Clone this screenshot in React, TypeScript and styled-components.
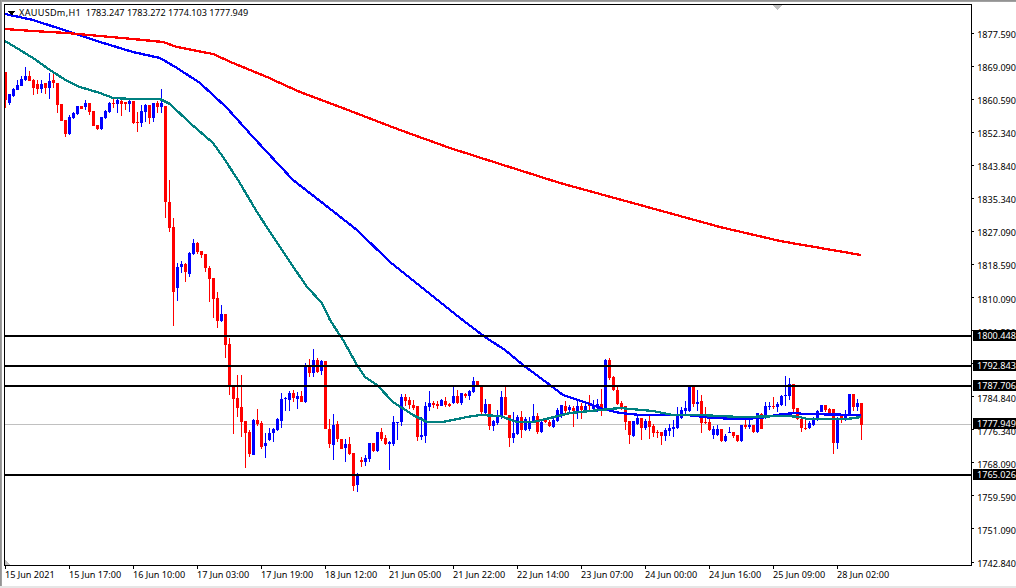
import React from 'react';
import styled, { createGlobalStyle } from 'styled-components';

type Candle = ['r' | 'b', number, number, number, number];

const candles: Candle[] = [
  ['r',72,100,72,108],['b',94,103,94,105],['b',89,96,88,97],['b',85,90,80,90],['b',79,86,76,86],
  ['b',76,80,67,81],['r',76,81,71,81],['r',80,88,79,95],['r',84,89,80,94],['b',84,89,80,93],
  ['r',83,88,83,94],['b',81,88,73,99],['r',80,83,73,88],['r',83,105,83,113],['r',104,121,104,121],
  ['r',120,134,120,137],['b',117,134,115,135],['b',113,118,112,119],['b',106,114,106,115],['r',106,109,106,109],
  ['b',103,107,100,110],['r',103,112,103,115],['r',111,126,111,126],['r',125,129,125,130],['b',117,129,117,130],
  ['b',111,118,110,119],['b',103,112,102,113],['r',103,104,98,108],['b',100,104,98,113],['r',101,104,99,116],
  ['r',102,104,102,110],['b',101,104,100,112],['r',101,123,101,124],['r',122,123,112,132],['b',111,123,105,127],
  ['b',105,112,104,122],['r',105,118,105,124],['b',103,118,103,122],['r',103,107,101,113],['b',103,107,89,113],
  ['r',106,202,106,218],['r',202,228,180,232],['r',227,292,218,326],['b',267,288,263,301],['b',264,267,261,273],
  ['r',264,272,263,282],['b',253,274,252,277],['b',243,254,239,255],['r',243,252,242,254],['r',251,255,251,258],
  ['r',254,268,254,272],['r',268,279,266,302],['r',278,299,278,318],['r',298,321,292,328],['b',314,321,305,322],
  ['r',314,345,314,358],['r',344,386,338,395],['r',385,399,385,434],['r',398,408,375,417],['r',407,422,375,437],
  ['r',421,433,421,468],['r',432,454,430,457],['b',420,455,419,455],['r',420,424,409,426],['r',423,447,421,449],
  ['b',443,446,433,458],['b',433,440,428,441],['b',429,433,428,442],['b',419,430,418,431],['b',399,421,393,428],
  ['b',398,399,397,411],['b',393,400,391,411],['r',393,398,390,402],['b',396,399,392,409],['r',396,402,391,402],
  ['b',367,402,363,403],['r',367,373,359,377],['b',360,373,349,377],['r',360,372,358,373],['b',361,371,360,375],
  ['r',361,429,361,429],['r',429,444,419,448],['b',425,445,414,460],['r',424,439,421,442],['r',439,449,439,449],
  ['b',444,448,439,462],['r',444,454,437,455],['r',453,486,453,491],['b',475,485,473,492],['r',460,462,457,467],
  ['b',458,462,455,466],['b',443,459,443,462],['r',443,451,443,452],['b',432,451,432,452],['r',432,439,428,441],
  ['r',438,444,435,445],['b',442,444,441,470],['b',422,444,416,446],['b',422,423,422,440],['b',397,422,394,426],
  ['r',397,401,394,406],['r',400,405,397,409],['r',405,408,400,410],['r',406,437,406,441],['b',435,437,417,440],
  ['b',406,436,402,443],['b',403,407,391,411],['r',403,405,401,408],['r',404,406,401,409],
  ['b',400,406,399,406],['r',401,405,397,407],['r',404,406,403,407],['b',396,403,387,404],['r',396,403,390,404],
  ['b',393,403,393,405],['r',394,396,393,398],['b',391,396,390,400],['b',381,392,377,393],['r',381,386,381,386],
  ['r',386,412,386,416],['b',404,413,399,416],['r',404,426,404,430],['b',421,426,420,431],['b',417,423,410,425],
  ['b',397,417,391,419],['r',397,415,387,415],['r',415,438,415,447],['b',433,438,412,443],['b',417,434,415,435],
  ['r',417,430,411,438],['b',419,430,417,431],['b',421,429,417,431],['b',416,422,404,423],['r',416,432,413,434],
  ['b',422,432,420,433],['r',419,422,418,423],['r',422,426,420,427],['b',420,427,418,428],['b',410,421,408,422],
  ['b',405,416,405,418],['r',406,411,401,413],['b',407,410,405,412],['r',408,411,406,427],['b',406,411,399,419],
  ['r',406,410,403,419],['b',406,410,401,412],['r',405,406,395,411],['b',405,409,400,412],['b',404,406,399,412],
  ['r',404,408,389,416],['b',360,409,359,409],['r',360,378,358,380],['r',377,390,376,391],['r',390,404,386,405],
  ['r',403,408,401,410],['r',406,422,406,430],['r',421,435,421,444],['b',421,436,421,437],['b',418,424,416,425],
  ['r',418,428,418,440],['b',421,428,419,430],['r',421,427,416,439],['r',426,433,424,437],['r',432,433,430,438],
  ['r',432,436,432,445],['b',430,436,428,441],['b',428,431,424,436],['b',427,429,420,437],['b',415,428,407,429],
  ['b',410,418,407,419],['b',408,411,401,415],['b',386,411,386,412],['r',386,404,386,407],['b',402,404,390,411],
  ['r',401,423,395,433],['r',422,423,407,424],['r',422,430,416,431],['b',429,435,426,439],['b',429,435,425,436],
  ['r',429,441,429,442],['b',436,441,434,442],['b',432,433,427,433],['r',432,436,432,438],['r',435,441,435,442],
  ['b',425,441,425,442],['r',425,427,419,429],['b',425,427,416,429],['r',425,432,425,433],['b',413,432,413,433],
  ['r',414,429,413,429],['b',406,418,402,419],['b',406,407,402,410],['r',406,407,397,409],['b',404,407,402,412],
  ['b',396,405,395,406],['b',395,396,376,406],['b',384,396,378,400],['r',384,409,384,413],['r',408,419,408,420],
  ['r',419,428,419,432],['r',428,429,419,430],['b',423,428,421,429],['b',420,425,417,426],['b',411,420,410,421],
  ['b',405,412,405,412],['r',405,410,405,412],['r',409,413,408,414],['r',409,443,409,454],['b',418,443,417,449],
  ['r',415,418,414,423],['b',414,420,410,421],['b',394,414,394,415],['r',394,407,394,411],['b',403,407,399,411],
  ['r',403,425,403,440]
];

const pts = (a: number[][]) => a.map(([x, y]) => `${x},${y}`).join(' ');

const blueMa = [[5,14],[33,20],[67,31],[100,42],[133,52],[160,58],[177,68],[200,83],[227,108],[253,137],[293,180],[320,201],[357,230],[390,262],[425,290],[460,318],[485,337],[505,350],[523,365],[550,385],[563,395],[587,403],[603,409],[620,413],[640,415],[687,415],[713,418],[740,419],[760,418],[783,414],[797,413],[803,414],[861,415]];
const redMa = [[5,29],[33,31],[67,33],[100,36],[133,39],[163,42],[177,47],[213,54],[233,63],[267,77],[300,92],[340,107],[400,130],[450,148],[500,164],[560,183],[640,205],[720,227],[780,241],[861,255]];
const tealMa = [[5,41],[20,50],[33,58],[50,70],[67,81],[80,87],[100,93],[113,98],[133,99],[160,99],[170,104],[190,123],[213,143],[223,157],[238,180],[257,212],[270,232],[290,262],[307,287],[322,303],[330,320],[343,340],[357,365],[365,377],[377,385],[393,402],[413,415],[427,422],[443,422],[467,417],[480,415],[500,416],[517,422],[533,422],[550,418],[570,413],[590,411],[620,408],[653,411],[673,415],[700,415],[740,417],[787,416],[800,417],[807,419],[847,419],[861,417]];

const levels = [336, 366, 386, 475];
const prices = ['1877.590','1869.090','1860.590','1852.340','1843.840','1835.340','1827.090','1818.590','1810.090','1801.590','1793.090','1784.840','1776.340','1768.090','1759.590','1751.090','1742.840'];
const dates = ['15 Jun 2021','15 Jun 17:00','16 Jun 10:00','17 Jun 03:00','17 Jun 19:00','18 Jun 12:00','21 Jun 05:00','21 Jun 22:00','22 Jun 14:00','23 Jun 07:00','24 Jun 00:00','24 Jun 16:00','25 Jun 09:00','28 Jun 02:00'];
const badges = [
  { label: '1800.448', y: 336 },
  { label: '1792.843', y: 366 },
  { label: '1787.706', y: 386 },
  { label: '1777.949', y: 424 },
  { label: '1765.026', y: 475 }
];

const Global = createGlobalStyle`
  html, body { margin: 0; padding: 0; background: #fff; overflow: hidden; }
`;

const Window = styled.div`
  position: relative;
  box-sizing: border-box;
  width: 1016px;
  height: 588px;
  display: flex;
  flex-direction: column;
  padding: 4px 0 2px 4px;
  background: #fff;
  font-family: "Noto Sans", "Liberation Sans", sans-serif;
  font-size: 9.1px;
  color: #000;
  overflow: hidden;
`;

const TopEdge = styled.div`
  position: absolute;
  left: 0;
  right: 0;
  top: 0;
  height: 2px;
  background: linear-gradient(#8c8c8c, #a8a8a8);
`;

const LeftEdge = styled.div`
  position: absolute;
  left: 0;
  top: 0;
  bottom: 2px;
  width: 2px;
  background: linear-gradient(90deg, #8c8c8c, #a8a8a8);
`;

const BottomEdge = styled.div`
  position: absolute;
  left: 0;
  right: 0;
  bottom: 0;
  height: 2px;
  background: #e6e6e6;
`;

const ChartRow = styled.div`
  display: flex;
  height: 562px;
`;

const Plot = styled.div`
  position: relative;
  box-sizing: border-box;
  width: 968px;
  height: 562px;
  border: 1px solid #000;
`;

const ChartSvg = styled.svg`
  display: block;
  width: 966px;
  height: 560px;
`;

const Legend = styled.div`
  position: absolute;
  left: 14px;
  top: 1px;
  line-height: 14px;
  white-space: pre;
`;

const LegendName = styled.span`
  letter-spacing: 0.3px;
`;

const PriceAxis = styled.div`
  position: relative;
  width: 44px;
  padding-top: 12.5px;
  display: flex;
  flex-direction: column;
`;

const PriceRow = styled.div`
  height: 33.0625px;
  flex: none;
  display: flex;
  align-items: center;
`;

const PriceTick = styled.i`
  width: 3px;
  height: 1px;
  background: #000;
  margin-right: 3px;
`;

const PriceLabel = styled.span`
  line-height: 12px;
  position: relative;
  top: 2px;
`;

const Badge = styled.div`
  position: absolute;
  left: 1px;
  right: 0;
  height: 11px;
  padding-left: 4px;
  background: #000;
  color: #fff;
  line-height: 12px;
  white-space: nowrap;
`;

const DateAxis = styled.div`
  display: flex;
  padding-left: 1px;
`;

const DateCell = styled.div`
  width: 64px;
  flex: none;
  display: flex;
  flex-direction: column;
`;

const DateTick = styled.i`
  width: 1px;
  height: 3px;
  background: #000;
`;

const DateLabel = styled.span`
  line-height: 12px;
  white-space: nowrap;
`;

export default function App() {
  return (
    <Window>
      <Global />
      <TopEdge />
      <LeftEdge />
      <BottomEdge />
      <ChartRow>
        <Plot>
          <ChartSvg viewBox="5 5 966 560" shapeRendering="crispEdges">
            <rect x="5" y="424" width="966" height="1" fill="#c0c0c0" />
            {candles.map((c, i) => {
              const x = 5 + i * 4;
              const fill = c[0] === 'r' ? '#ff0000' : '#0000ff';
              return (
                <g key={i} fill={fill}>
                  <rect x={x} y={c[3]} width="1" height={c[4] - c[3]} />
                  <rect x={x - 1} y={c[1]} width="3" height={Math.max(1, c[2] - c[1])} />
                </g>
              );
            })}
            <polyline points={pts(blueMa)} fill="none" stroke="#0000ff" strokeWidth="2.3" />
            <polyline points={pts(redMa)} fill="none" stroke="#ff0000" strokeWidth="2.3" />
            <polyline points={pts(tealMa)} fill="none" stroke="#008080" strokeWidth="2.3" />
            {levels.map((y) => (
              <rect key={y} x="5" y={y - 1} width="966" height="2" fill="#000" />
            ))}
            <polygon points="8,11 15.5,11 11.75,15.5" fill="#000" />
            <polygon points="772,5 782,5 777,10" fill="#c0c0c0" />
            <polygon points="5,560 5,565 10,565" fill="#c0c0c0" />
          </ChartSvg>
          <Legend>
            <LegendName>XAUUSDm,H1</LegendName>  1783.247 1783.272 1774.103 1777.949
          </Legend>
        </Plot>
        <PriceAxis>
          {prices.map((p) => (
            <PriceRow key={p}>
              <PriceTick />
              <PriceLabel>{p}</PriceLabel>
            </PriceRow>
          ))}
          {badges.map((b) => (
            <Badge key={b.label} style={{ top: b.y - 4 - 6 }}>
              {b.label}
            </Badge>
          ))}
        </PriceAxis>
      </ChartRow>
      <DateAxis>
        {dates.map((d) => (
          <DateCell key={d}>
            <DateTick />
            <DateLabel>{d}</DateLabel>
          </DateCell>
        ))}
      </DateAxis>
    </Window>
  );
}
